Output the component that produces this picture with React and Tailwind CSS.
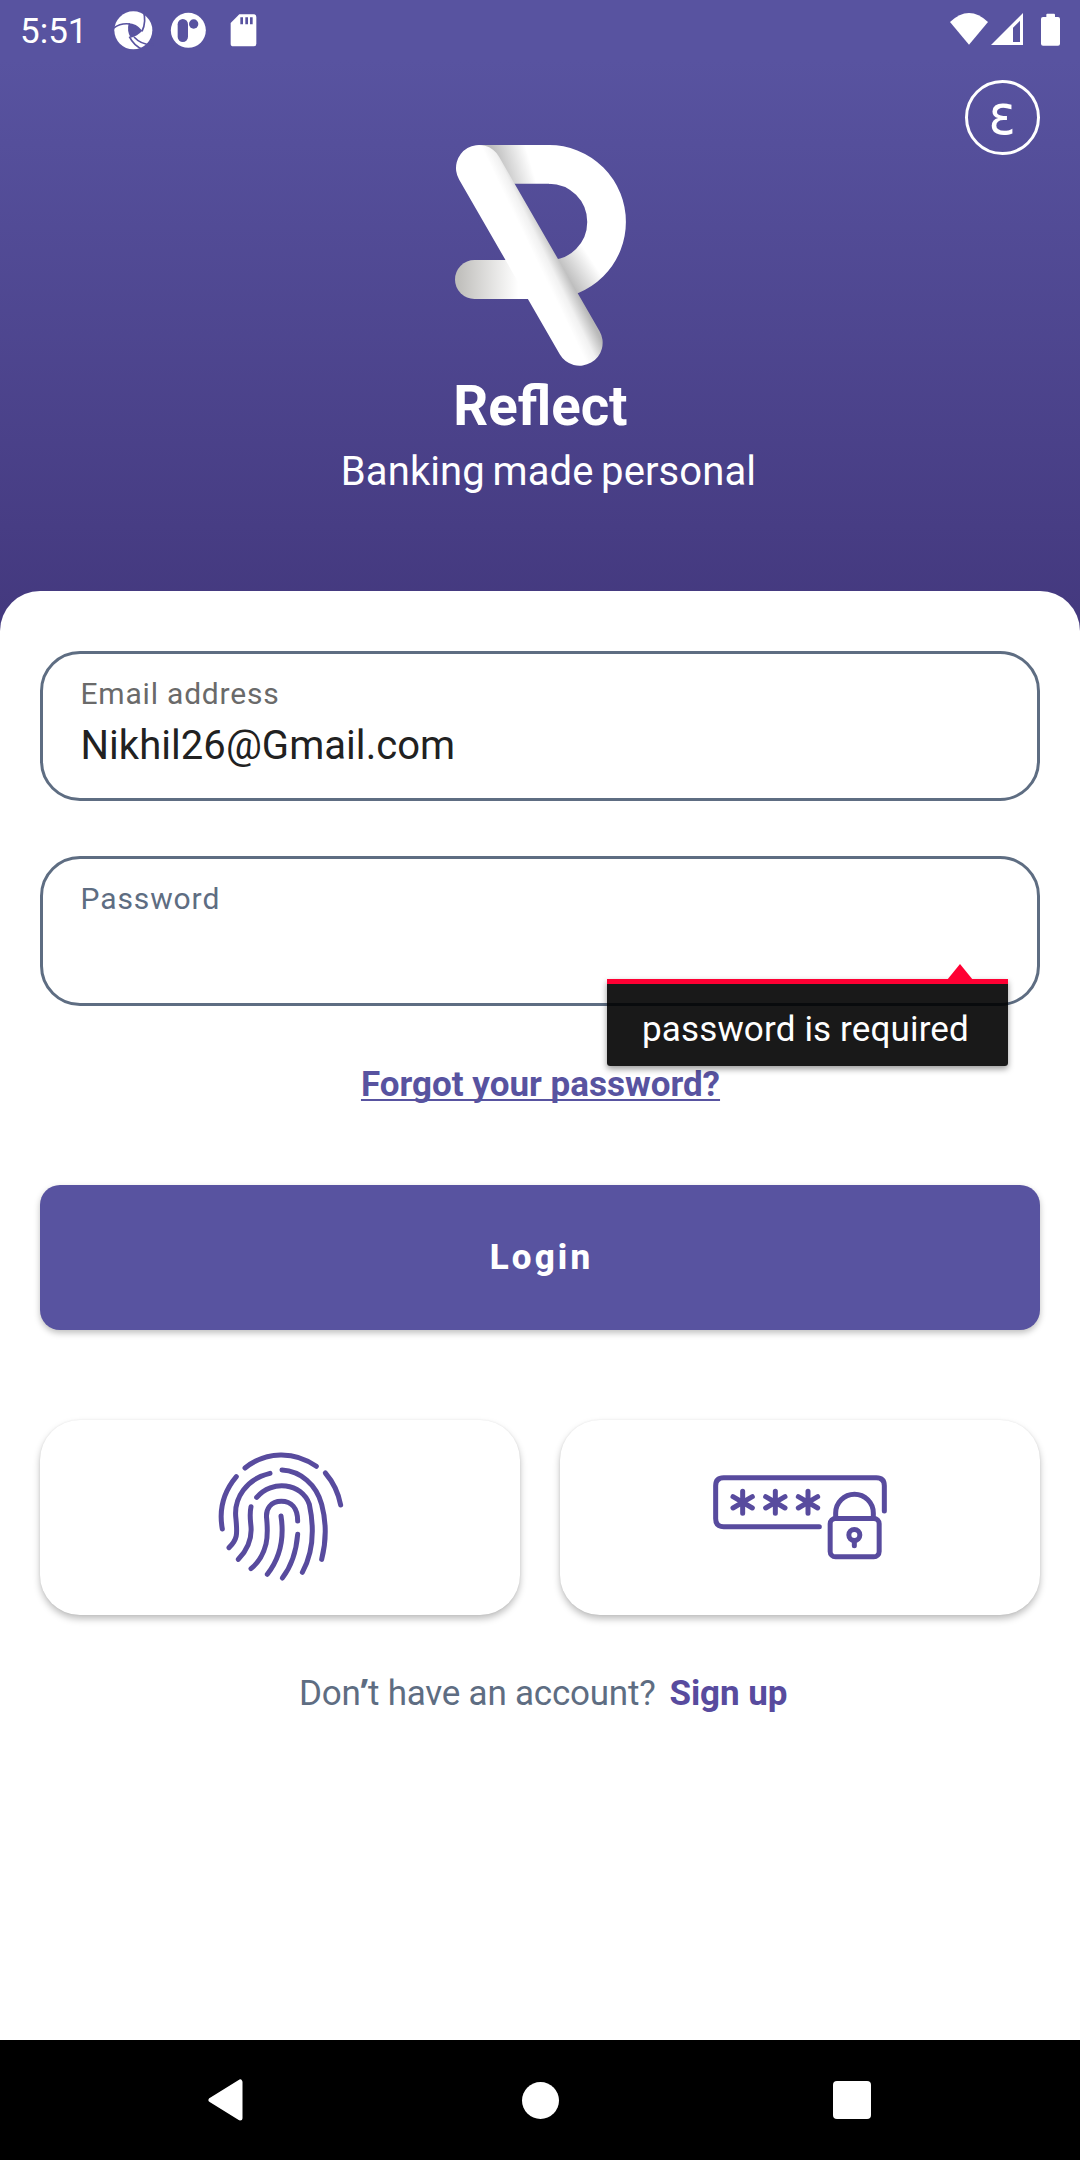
function StatusIcons() {
  return (
    <svg className="block h-[40px] w-[146px]" viewBox="339 30 438 120" fill="#fff">
      <circle cx="400" cy="91" r="57" />
      <path d="M386 70 Q408 70 427 92 Q412 108 392 113 Q380 95 386 70Z" fill="#5853a0" />
      <g fill="none" stroke="#5853a0" strokeWidth="5">
        <path d="M341 84 Q363 68 390 72" />
        <path d="M426 94 Q440 65 430 33" />
        <path d="M388 110 Q402 138 428 148" />
        <path d="M402 111 Q425 136 460 134" />
      </g>
      <circle cx="565" cy="91" r="52.5" />
      <rect x="533" y="57" width="31" height="69" rx="15.500" fill="#5853a0" />
      <circle cx="581" cy="72" r="14" fill="#5853a0" />
      <path d="M718 43 H761 Q769 43 769 51 V131 Q769 139 761 139 H700 Q692 139 692 131 V69Z" />
      <path d="M721 52h8v21h-8z M736 52h8v21h-8z M750 52h8v21h-8z" fill="#5853a0" />
    </svg>
  );
}

function SystemIcons() {
  return (
    <svg className="block h-[40px] w-[112px]" viewBox="87 30 336 120" fill="#fff">
      <path d="M90 66 Q147 12 204 66 L147 134Z" />
      <path fillRule="evenodd" d="M213 135 L309 39 V135Z M279 83 V126 H300 V62Z" />
      <rect x="363" y="51" width="57" height="86" rx="6" />
      <rect x="379" y="41" width="26" height="14" rx="3" />
    </svg>
  );
}

function Logo() {
  return (
    <svg className="block h-[224px] w-[172px]" viewBox="75 39 516 672" fill="none">
      <defs>
        <linearGradient id="top" gradientUnits="userSpaceOnUse" x1="205" y1="120" x2="300" y2="92">
          <stop offset="0" stopColor="#bdbdbd" />
          <stop offset="1" stopColor="#fff" />
        </linearGradient>
        <linearGradient id="bowl" gradientUnits="userSpaceOnUse" x1="412" y1="440" x2="486" y2="392">
          <stop offset="0" stopColor="#bfbfbf" />
          <stop offset="1" stopColor="#fff" />
        </linearGradient>
        <linearGradient id="tail" gradientUnits="userSpaceOnUse" x1="85" y1="448" x2="265" y2="448">
          <stop offset="0" stopColor="#c0bfbc" />
          <stop offset="1" stopColor="#fff" />
        </linearGradient>
        <linearGradient id="leg" gradientUnits="userSpaceOnUse" x1="294" y1="378" x2="372" y2="340">
          <stop offset="0.2" stopColor="#fff" />
          <stop offset="0.55" stopColor="#f1f1f1" />
          <stop offset="1" stopColor="#b8b8b8" />
        </linearGradient>
      </defs>
      <path d="M147 103 H362" stroke="url(#top)" strokeWidth="116" />
      <path d="M357 103 A172.750 172.750 0 0 1 357 448.500" stroke="url(#bowl)" strokeWidth="116" />
      <path d="M133.500 448.500 H320" stroke="url(#tail)" strokeWidth="117" strokeLinecap="round" />
      <path d="M147 114 L449 638" stroke="url(#leg)" strokeWidth="138" strokeLinecap="round" />
    </svg>
  );
}

function Fingerprint() {
  return (
    <svg
      className="block h-[134px] w-[130px]"
      viewBox="50 59 390 402"
      fill="none"
      stroke="#584b9e"
      strokeWidth="15"
      strokeLinecap="round"
    >
      <path d="M134 116 C197 65 283 64 348 111" />
      <path d="M375 131 C400 160 415 195 421 227" />
      <path d="M108 142 C72 185 55 240 66 299" />
      <path d="M209 132 C140 148 98 205 107 270 C110 310 114 328 86 355" />
      <path d="M245 122 C300 125 348 165 364 225 C380 285 378 335 364 390" />
      <path d="M169 204 C215 150 304 160 327 225 C343 300 338 370 306 429" />
      <path d="M152 232 C147 255 150 270 152 292 C155 330 138 365 114 390" />
      <path d="M292 275 C292 235 272 216 243 216 C212 216 195 238 199 268 C202 300 203 318 197 344 C189 376 172 402 152 418" />
      <path d="M242 260 C252 325 240 385 201 435" />
      <path d="M292 315 C288 365 272 412 246 446" />
    </svg>
  );
}

function PasswordLock() {
  return (
    <svg
      className="block h-[90px] w-[180px]"
      viewBox="60 65 540 270"
      fill="none"
      stroke="#584b9e"
      strokeWidth="15"
      strokeLinecap="round"
    >
      <path d="M388 229 H101 Q77 229 77 205 V106 Q77 82 101 82 H559 Q583 82 583 106 V182" />
      {[158, 256, 354].map((x) => (
        <g key={x} transform={`translate(${x} 156)`}>
          <path d="M0 -33 V33 M-29 -17 L29 17 M29 -17 L-29 17" />
        </g>
      ))}
      <rect x="420.500" y="204.500" width="147" height="115" rx="16" />
      <path d="M437 200 V188 A56.500 56.500 0 0 1 550 188 V200" />
      <circle cx="493" cy="254" r="16.500" />
      <path d="M493 272 V286" />
    </svg>
  );
}

export default function App() {
  return (
    <div className="flex h-[2160px] w-[1080px] flex-col bg-[linear-gradient(#5853a0_0px,#5853a0_60px,#44397f_610px)] font-[Roboto,sans-serif]">
      <div className="flex h-[60px] items-start justify-between pt-[10px] pr-[19px] pl-[20px] text-white">
        <div className="flex">
          <span className="w-[93px] pt-px text-[35px] leading-[41px]">5:51</span>
          <StatusIcons />
        </div>
        <SystemIcons />
      </div>

      <header className="flex h-[531px] flex-col items-center pt-[20px] text-white">
        <button className="mr-[40px] flex size-[75px] items-center justify-center self-end rounded-full border-[3px] border-white pb-[6px] font-['DejaVu_Sans'] text-[56px] leading-none">
          <span className="scale-x-[0.9]">ε</span>
        </button>
        <div className="-mt-[12px] ml-[2px]">
          <Logo />
        </div>
        <h1 className="mt-[6px] scale-x-[0.975] text-[56px] leading-[66px] font-bold">Reflect</h1>
        <p className="mt-[9px] pl-[17px] text-[40px] leading-[47px] tracking-[0.1px] [word-spacing:-2.4px]">
          Banking made personal
        </p>
      </header>

      <main className="flex grow flex-col rounded-t-[40px] bg-white px-[40px] pt-[60px]">
        <div className="h-[150px] rounded-[40px] border-[3px] border-[#5e6d82] px-[37.500px] pt-[22px]">
          <div className="text-[30px] leading-[35px] tracking-[0.8px] text-[#6a6a6a]">Email address</div>
          <div className="mt-[11px] text-[40px] leading-[47px] tracking-[0.050px] text-[#212121]">
            Nikhil26@Gmail.com
          </div>
        </div>

        <div className="relative mt-[55px] h-[150px] rounded-[40px] border-[3px] border-[#5e6d82] px-[37.500px] pt-[22px]">
          <div className="text-[30px] leading-[35px] tracking-[0.9px] text-[#5e6d82]">Password</div>
          <div className="absolute top-[120px] left-[564px] z-10 h-[87px] w-[401px] rounded-b-[3px] border-t-[5px] border-[#ff0033] bg-black/90 bg-clip-padding pt-[25px] pl-[35px] text-[35px] leading-[41px] tracking-[0.150px] text-white shadow-[0_3px_6px_rgba(0,0,0,0.4)]">
            password is required
            <svg className="absolute -top-[20px] right-[35px] h-[16px] w-[26px]" viewBox="0 0 26 16">
              <path d="M13 0 L26 16 H0Z" fill="#ff0033" />
            </svg>
          </div>
        </div>

        <a className="mt-[58px] ml-px self-center text-[35px] leading-[41px] font-bold text-[#5853a0] underline decoration-2 underline-offset-[3px] [text-decoration-skip-ink:none]">
          Forgot your password?
        </a>

        <button className="mt-[80px] h-[145px] shrink-0 rounded-[20px] bg-[#5853a0] pl-[3px] text-[35px] leading-[41px] font-extrabold tracking-[3.100px] text-white shadow-[0_3px_6px_rgba(0,0,0,0.25)]">
          Login
        </button>

        <div className="mt-[90px] grid h-[195px] shrink-0 grid-cols-2 gap-[40px]">
          <button className="flex rounded-[40px] bg-white pt-[29px] pl-[176.500px] shadow-[0_4px_7px_rgba(0,0,0,0.25),0_0_2px_rgba(0,0,0,0.08)]">
            <Fingerprint />
          </button>
          <button className="flex rounded-[40px] bg-white pt-[51.500px] pl-[150px] shadow-[0_4px_7px_rgba(0,0,0,0.25),0_0_2px_rgba(0,0,0,0.08)]">
            <PasswordLock />
          </button>
        </div>

        <p className="mt-[58px] flex pl-[259px] text-[35px] leading-[41px] text-[#5e6d82]">
          <span className="w-[370.500px] tracking-[-0.220px]">
            Don<span className="font-['Open_Sans'] leading-none font-bold">’</span>t have an account?
          </span>
          <a className="font-bold tracking-[-0.100px] text-[#584b9e]">Sign up</a>
        </p>
      </main>

      <nav className="flex h-[120px] items-center justify-between bg-black pr-[209px] pl-[207px]">
        <svg className="h-[42px] w-[36px]" viewBox="0 0 36 42">
          <path d="M4 21 L33 3 V39Z" fill="#fff" stroke="#fff" strokeWidth="5" strokeLinejoin="round" />
        </svg>
        <div className="ml-[4px] size-[37px] rounded-full bg-white" />
        <div className="size-[38px] rounded-[4px] bg-white" />
      </nav>
    </div>
  );
}
